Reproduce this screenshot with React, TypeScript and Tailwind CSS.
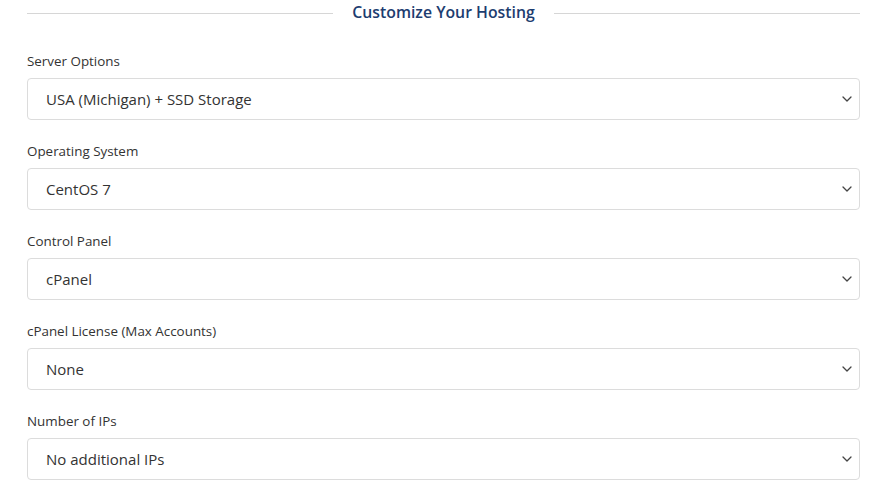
import React from 'react';

const fields = [
  { label: 'Server Options', value: 'USA (Michigan) + SSD Storage' },
  { label: 'Operating System', value: 'CentOS 7' },
  { label: 'Control Panel', value: 'cPanel' },
  { label: 'cPanel License (Max Accounts)', value: 'None' },
  { label: 'Number of IPs', value: 'No additional IPs' },
];

function Chevron() {
  return (
    <svg width="10" height="6" viewBox="0 0 10 6" fill="none" className="shrink-0">
      <path d="M1 1l4 4 4-4" stroke="#444" strokeWidth="1.3" strokeLinecap="round" strokeLinejoin="round" />
    </svg>
  );
}

export default function App() {
  return (
    <div className="w-[880px] h-[490px] bg-white pl-[27px] pr-[20px] pt-[2px] font-['Open_Sans',sans-serif] overflow-hidden">
      <div className="flex items-center gap-[19px] h-[22px]">
        <div className="flex-1 h-px bg-[#d6d6d6]" />
        <h2 className="text-[15.8px] font-semibold text-[#1d3d70] leading-none">Customize Your Hosting</h2>
        <div className="flex-1 h-px bg-[#d6d6d6]" />
      </div>
      <div className="mt-[28px] flex flex-col gap-[22px]">
        {fields.map((f) => (
          <div key={f.label} className="flex flex-col">
            <label className="text-[13.4px] text-[#333] leading-[18px] mb-[8px]">{f.label}</label>
            <div className="h-[42px] border border-[#dcdcdc] rounded-[4px] flex items-center justify-between pl-[18px] pr-[7px]">
              <span className="text-[15px] text-[#333]">{f.value}</span>
              <Chevron />
            </div>
          </div>
        ))}
      </div>
    </div>
  );
}
